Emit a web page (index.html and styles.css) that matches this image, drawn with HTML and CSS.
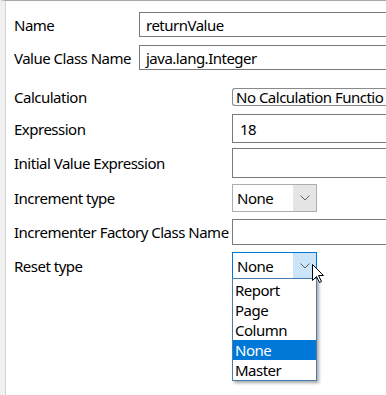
FILE: index.html
```html
<!DOCTYPE html>
<html>
  <head>
    <meta charset="UTF-8">
    <title>Variable Properties</title>
    <link rel="stylesheet" href="styles.css">
  </head>
  <body>
    <div class="panel">
      <div class="group group-top">
        <div class="row row-name">
          <label>Name</label>
          <div class="field">returnValue</div>
        </div>
        <div class="row row-name">
          <label>Value Class Name</label>
          <div class="field">java.lang.Integer</div>
        </div>
      </div>

      <div class="group group-bottom">
        <div class="row row-calc">
          <label>Calculation</label>
          <div class="field calc">No Calculation Functio</div>
        </div>
        <div class="row row-expr">
          <label>Expression</label>
          <div class="field expr">18</div>
        </div>
        <div class="row row-init">
          <label>Initial Value Expression</label>
          <div class="field"></div>
        </div>
        <div class="row row-incr">
          <label>Increment type</label>
          <div class="combo">
            <span class="combo-text">None</span>
            <span class="combo-btn">
              <svg width="10" height="6" viewBox="0 0 10 6"><polyline points="0.5,0.5 5,5 9.5,0.5" fill="none" stroke="#606060" stroke-width="1"/></svg>
            </span>
          </div>
        </div>
        <div class="row row-factory">
          <label>Incrementer Factory Class Name</label>
          <div class="field"></div>
        </div>
        <div class="row row-reset">
          <label>Reset type</label>
          <div class="combo open">
            <span class="combo-text">None</span>
            <span class="combo-btn">
              <svg width="10" height="6" viewBox="0 0 10 6"><polyline points="0.5,0.5 5,5 9.5,0.5" fill="none" stroke="#606060" stroke-width="1"/></svg>
            </span>
            <ul class="dropdown">
              <li>Report</li>
              <li>Page</li>
              <li>Column</li>
              <li class="on">None</li>
              <li>Master</li>
            </ul>
            <svg class="cursor" width="13" height="20" viewBox="0 0 13 20">
              <path d="M0.5,0.5 L0.5,16.5 L4.5,12.5 L7.5,18.5 L9.5,17.5 L6.5,11.5 L11.5,11.5 Z" fill="#fff" stroke="#000" stroke-width="1" stroke-linejoin="miter"/>
            </svg>
          </div>
        </div>
      </div>
    </div>
  </body>
</html>
```

FILE: styles.css
```css
* {
  margin: 0;
  padding: 0;
  box-sizing: border-box;
}

body {
  font-family: "Noto Sans", "Liberation Sans", sans-serif;
  font-size: 15px;
  letter-spacing: -0.5px;
  color: #000;
  background: #fff;
  overflow: hidden;
}

.panel {
  height: 395px;
  border-left: 5px solid #f0f0f0;
  border-top: 1px solid #a8a8a8;
  box-shadow: inset 1px 0 0 #d4d4d4;
  padding-left: 9px;
}

.group {
  display: flex;
  flex-direction: column;
}

.group-top {
  padding-top: 11px;
  gap: 8px;
}

.group-top label {
  width: 125px;
}

.group-bottom {
  padding-top: 18px;
}

.group-bottom label {
  width: 218px;
}

.row {
  display: flex;
  align-items: center;
}

.row label {
  flex: none;
  white-space: nowrap;
}

.field {
  flex: 1;
  height: 100%;
  border: 1px solid #7a7a7a;
  border-right: none;
  background: #fff;
  padding-left: 6px;
  display: flex;
  align-items: center;
  white-space: nowrap;
  overflow: hidden;
}

.row-name {
  height: 25px;
}

.row-calc {
  height: 18px;
}

.field.calc {
  border-color: #8a8a8a;
  border-radius: 3px 0 0 3px;
  padding-left: 3px;
  background: #fcfcfc;
}

.row-expr {
  height: 29px;
  margin-top: 8px;
}

.field.expr {
  padding-left: 7px;
}

.row-init {
  height: 30px;
  margin-top: 5px;
}

.row-incr {
  height: 28px;
  margin-top: 6px;
}

.row-factory {
  height: 26px;
  margin-top: 7px;
}

.row-reset {
  height: 27px;
  margin-top: 7px;
}

.combo {
  position: relative;
  width: 85px;
  height: 100%;
  border: 1px solid #adadad;
  display: flex;
  background: #fff;
}

.combo-text {
  flex: 1;
  padding-left: 4px;
  display: flex;
  align-items: center;
}

.combo-btn {
  width: 23px;
  background: #e5e5e5;
  display: flex;
  align-items: center;
  justify-content: center;
}

.combo.open {
  border-color: #0078d7;
}

.combo.open .combo-btn {
  background: #cce4f7;
}

.dropdown {
  position: absolute;
  top: 100%;
  left: -1px;
  width: 85px;
  list-style: none;
  background: #fff;
  border: 1px solid #4a7cae;
  box-shadow: 2px 2px 3px rgba(0, 0, 0, .35);
  z-index: 2;
}

.dropdown li {
  height: 20px;
  line-height: 20px;
  padding-left: 2px;
  margin-top: 1px;
}

.dropdown li + li {
  margin-top: 0;
}

.dropdown li.on {
  background: #0078d7;
  color: #fff;
}

.cursor {
  position: absolute;
  left: 79px;
  top: 11px;
  z-index: 3;
}
```
